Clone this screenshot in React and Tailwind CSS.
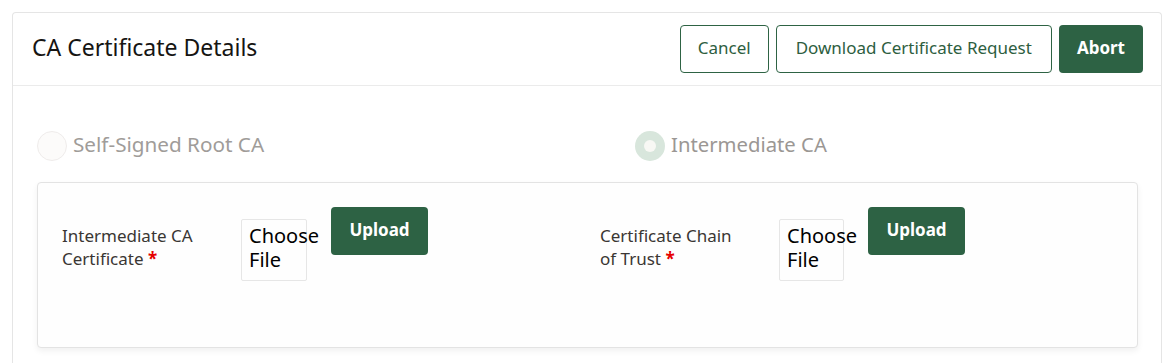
export default function App() {
  const font = { fontFamily: '"Noto Sans", "Open Sans", sans-serif' }
  return (
    <div className="min-h-screen bg-white pt-3 pl-3 pr-[14px]" style={font}>
      <div className="bg-white border border-[#e5e5e5] border-b-0 rounded-t-[4px] h-[360px]">
        <div className="flex items-center justify-between h-[73px] border-b border-[#ebebeb] pl-[19px] pr-[18px]">
          <h1 className="text-[23px] text-[#161513] pb-[4px]">CA Certificate Details</h1>
          <div className="flex items-center gap-[7px]">
            <button className="h-[48px] px-[17px] border border-[#2e6344] rounded-[4px] text-[17px] text-[#2e5e3f] bg-white pb-[2px]">Cancel</button>
            <button className="h-[48px] px-[19px] border border-[#2e6344] rounded-[4px] text-[17px] text-[#2e5e3f] bg-white pb-[2px]">Download Certificate Request</button>
            <button className="h-[48px] px-[18px] rounded-[4px] text-[17px] font-bold text-white bg-[#2d6244] pb-[2px]">Abort</button>
          </div>
        </div>
        <div className="pl-[24px] pr-[23px] pt-[45px]">
          <div className="grid grid-cols-[598px_1fr] items-center">
            <div className="flex items-center gap-[6px]">
              <span className="w-[30px] h-[30px] rounded-full border border-[#efeceb] bg-[#fcfbfa]" />
              <span className="text-[20.7px] leading-[26px] text-[#a09c99] pb-[4px]">Self-Signed Root CA</span>
            </div>
            <div className="flex items-center gap-[6px]">
              <span className="w-[30px] h-[30px] rounded-full bg-[#d8e6dc] flex items-center justify-center">
                <span className="w-[12px] h-[12px] rounded-full bg-[#f8f8f4]" />
              </span>
              <span className="text-[20.3px] leading-[26px] text-[#9b9794] pb-[4px]">Intermediate CA</span>
            </div>
          </div>
          <div className="mt-[21px] h-[166px] border border-[#e3e3e3] rounded-[4px] bg-[#fefefe] shadow-[0_3px_6px_rgba(0,0,0,0.06)] grid grid-cols-[550px_1fr] pt-[24px]">
            <div className="flex items-start pl-[24px]">
              <div className="w-[179px] pt-[17px] text-[17px] leading-[23px] text-[#3a3633]">
                Intermediate CA<br />Certificate <span className="text-[#e60000] font-bold">*</span>
              </div>
              <div className="mt-[12px] w-[66px] h-[62px] border border-[#e6e6e6] rounded-[2px] pl-[7px] text-[20px] leading-[24px] text-black pt-[4px] whitespace-nowrap overflow-visible">
                Choose<br />File
              </div>
              <button className="ml-[24px] h-[48px] w-[97px] rounded-[4px] text-[17px] font-bold text-white bg-[#2d6244] pb-[3px]">Upload</button>
            </div>
            <div className="flex items-start pl-[12px]">
              <div className="w-[179px] pt-[17px] text-[17px] leading-[23px] text-[#3a3633]">
                Certificate Chain<br />of Trust <span className="text-[#e60000] font-bold">*</span>
              </div>
              <div className="mt-[12px] w-[65px] h-[62px] border border-[#e6e6e6] rounded-[2px] pl-[7px] text-[20px] leading-[24px] text-black pt-[4px] whitespace-nowrap overflow-visible">
                Choose<br />File
              </div>
              <button className="ml-[24px] h-[48px] w-[97px] rounded-[4px] text-[17px] font-bold text-white bg-[#2d6244] pb-[3px]">Upload</button>
            </div>
          </div>
        </div>
      </div>
    </div>
  )
}
